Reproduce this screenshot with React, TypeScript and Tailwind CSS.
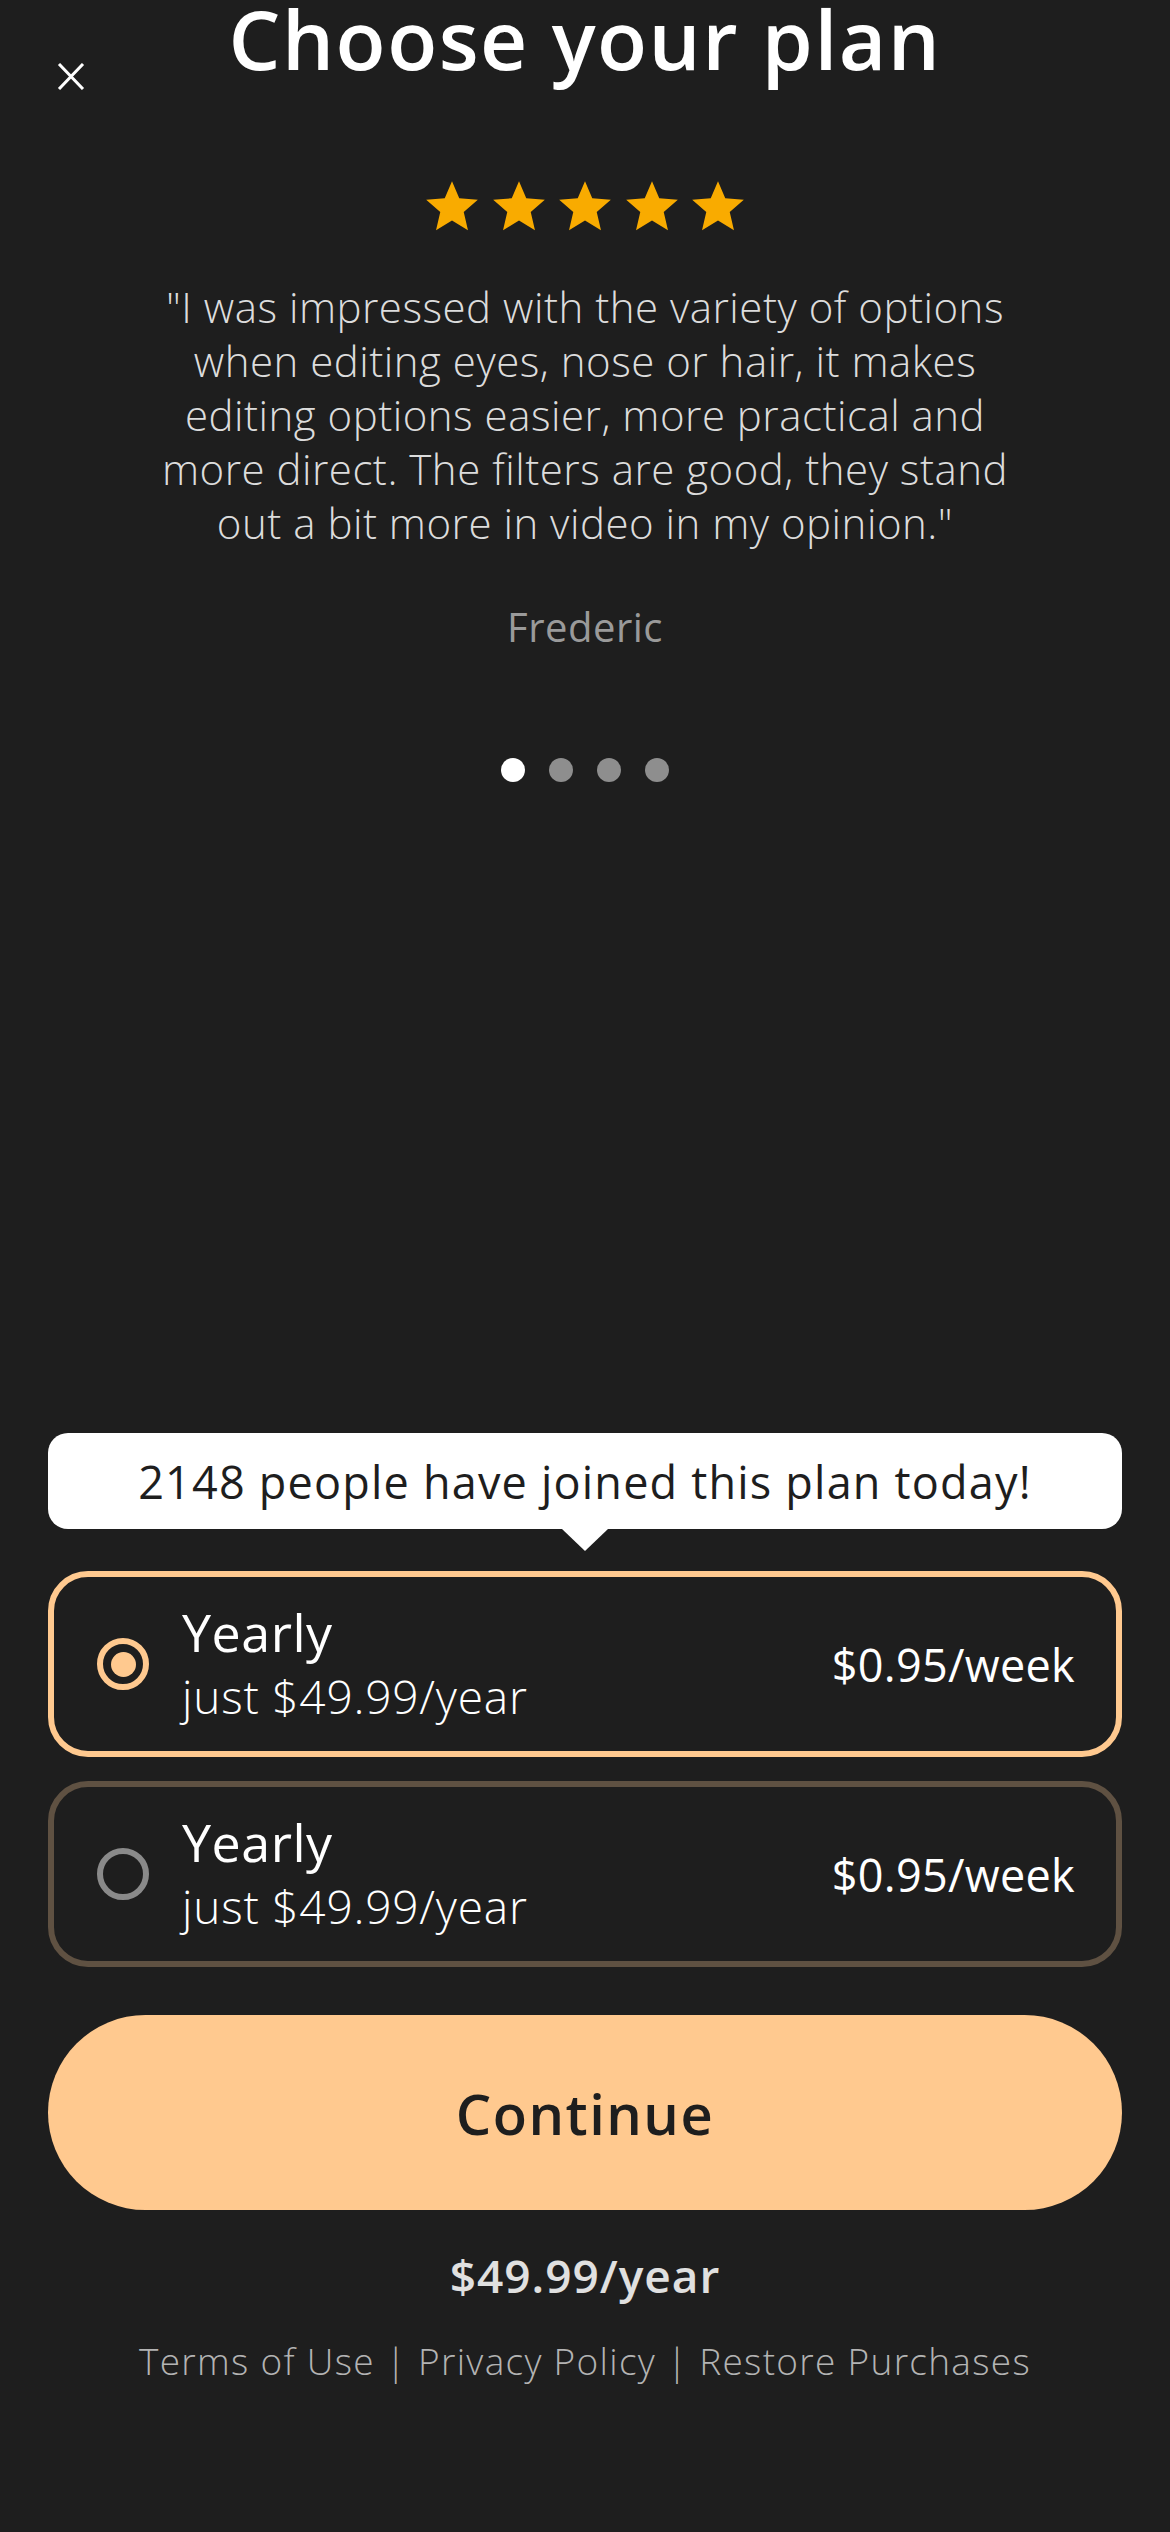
// Paywall: plan selection with review carousel, plan cards and continue button.
import { useState } from "react";

const FONT = "font-['Open_Sans',sans-serif]";

const PLANS = [
  { id: "a", name: "Yearly", sub: "just $49.99/year", price: "$0.95/week" },
  { id: "b", name: "Yearly", sub: "just $49.99/year", price: "$0.95/week" },
];

function Star() {
  return (
    <svg viewBox="0 0 24 24" className="h-[62px] w-[62px]" fill="#f9ab00">
      <path d="M12 17.27 18.18 21l-1.64-7.03L22 9.24l-7.19-.61L12 2 9.19 8.63 2 9.24l5.46 4.73L5.82 21z" />
    </svg>
  );
}

function PlanCard({
  plan,
  selected,
  onSelect,
}: {
  plan: (typeof PLANS)[number];
  selected: boolean;
  onSelect: () => void;
}) {
  return (
    <button
      onClick={onSelect}
      className={`flex h-[186px] w-full items-center rounded-[40px] border-[6px] pl-[43px] pr-[41px] text-left ${
        selected ? "border-[#ffc98f]" : "border-[#5f5142]"
      }`}
    >
      <span
        className={`flex h-[52px] w-[52px] flex-none items-center justify-center rounded-full border-[6px] ${
          selected ? "border-[#ffc98f]" : "border-[#8a8a8a]"
        }`}
      >
        {selected && <span className="h-[25px] w-[25px] rounded-full bg-[#ffc98f]" />}
      </span>
      <span className="ml-[33px] flex flex-1 flex-col">
        <span className="text-[52px] font-medium leading-[64px] tracking-[0.5px] text-white">{plan.name}</span>
        <span className="text-[46px] font-light leading-[64px] tracking-[0.8px] text-white">{plan.sub}</span>
      </span>
      <span className="text-[45px] leading-none tracking-[0.3px] text-white">{plan.price}</span>
    </button>
  );
}

export default function App() {
  const [selected, setSelected] = useState("a");
  const [slide] = useState(0);

  return (
    <div className={`min-h-[2532px] w-[1170px] bg-[#1e1e1e] ${FONT}`}>
      {/* ヘッダー */}
      <header className="grid h-[80px] grid-cols-[1fr_auto_1fr] items-start">
        <div className="pl-[57px] pt-[63px]">
          <svg viewBox="0 0 28 27" className="h-[27px] w-[28px]" stroke="white" strokeWidth="3">
            <path d="M2 1 26 26M26 1 2 26" />
          </svg>
        </div>
        <h1 className="text-[82px] font-semibold leading-[76px] tracking-[1.5px] text-white">Choose your plan</h1>
        <div />
      </header>

      {/* レビュー */}
      <section className="flex flex-col items-center">
        <div className="mt-[96px] flex gap-[4.5px]">
          {[0, 1, 2, 3, 4].map((i) => (
            <Star key={i} />
          ))}
        </div>
        <p className="mt-[42px] w-[880px] text-center text-[42px] font-light leading-[54px] tracking-[0.5px] text-[#dcdcdc]">
          "I was impressed with the variety of options when editing eyes, nose or hair, it makes editing
          options easier, more practical and more direct. The filters are good, they stand out a bit more in
          video in my opinion."
        </p>
        <p className="mt-[48px] text-[40px] font-medium leading-[57px] tracking-[0.5px] text-[#9a9a9a]">Frederic</p>
        <div className="mt-[103px] flex gap-[24px]">
          {[0, 1, 2, 3].map((i) => (
            <span
              key={i}
              className={`h-[24px] w-[24px] rounded-full ${i === slide ? "bg-white" : "bg-[#8e8e8e]"}`}
            />
          ))}
        </div>
      </section>

      {/* プラン選択 */}
      <section className="mt-[651px] px-[48px]">
        <div className="flex h-[96px] items-center justify-center rounded-[20px] bg-white">
          <span className="text-[45px] font-medium leading-none tracking-[1.2px] text-[#1e1e1e]">
            2148 people have joined this plan today!
          </span>
        </div>
        <div className="mx-auto h-0 w-0 border-x-[23px] border-t-[22px] border-x-transparent border-t-white" />

        <div className="mt-[20px] flex flex-col gap-[24px]">
          {PLANS.map((p) => (
            <PlanCard key={p.id} plan={p} selected={selected === p.id} onSelect={() => setSelected(p.id)} />
          ))}
        </div>

        <button className="mt-[48px] flex h-[195px] w-full items-center justify-center rounded-full bg-[#ffc98f]">
          <span className="text-[56px] font-semibold leading-none tracking-[1.5px] text-[#1e1e1e]">Continue</span>
        </button>

        <p className="mt-[32px] text-center text-[46px] font-semibold leading-[66px] tracking-[1px] text-[#e0e0e0]">
          $49.99/year
        </p>
        <p className="mt-[27px] text-center text-[37px] font-light leading-[52px] tracking-[1.3px] text-[#b3b3b3]">
          Terms of Use | Privacy Policy | Restore Purchases
        </p>
      </section>
    </div>
  );
}
